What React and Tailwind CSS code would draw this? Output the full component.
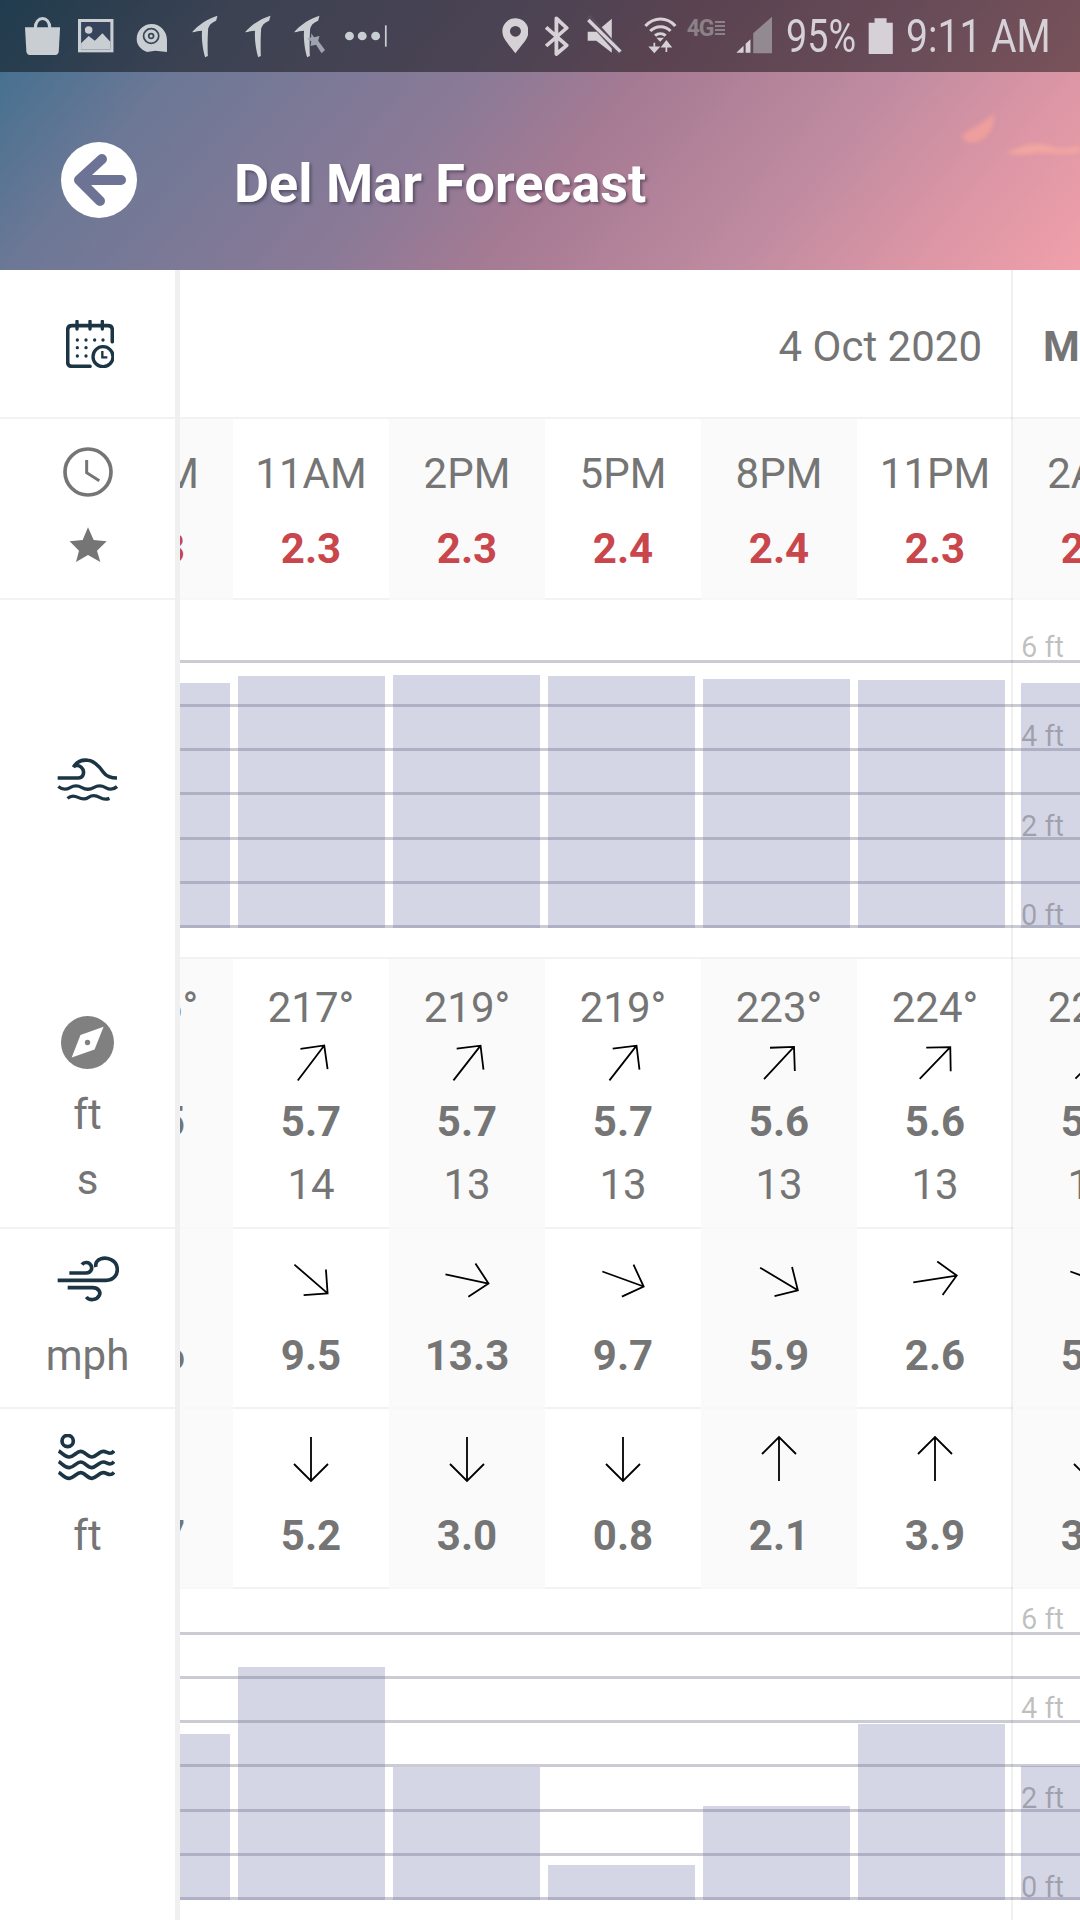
import React from "react";

const S = ({ x, w, className = "", children }) => (
  <svg width={w / 2.904} height={72} viewBox={`${x} 0 ${w} 216`} preserveAspectRatio="none" className={`shrink-0 ${className}`}>
    {children}
  </svg>
);

const L = "#c9ced3";
const R = "#d6d1d6";
const PICK = "M558 97C575 75 605 55 632 47L628 62C615 68 610 72 605 85C603 110 603 145 604 168L596 172C590 150 585 120 587 92C578 92 568 95 558 97Z";

const StatusBar = () => (
  <div className="flex h-[72px] items-center bg-black/45">
    <S x={72} w={102} className="ml-[25px]">
      <path d="M72 82H174L170 155Q168 165 158 165H88Q78 165 76 155Z" fill={L} />
      <path d="M102 84C102 46 144 46 144 84" fill="none" stroke={L} strokeWidth="9" />
    </S>
    <S x={227} w={103} className="ml-[18px]">
      <rect x="227" y="57" width="103" height="100" fill={L} />
      <rect x="236" y="66" width="85" height="82" fill="#35445a" />
      <circle cx="258" cy="90" r="11" fill={L} />
      <path d="M236 130L258 108L276 122L298 100L321 125V148H236Z" fill={L} />
    </S>
    <S x={390} w={93} className="ml-[22px]">
      <path d="M392 118C392 90 412 72 436 72C460 72 480 94 480 120V156L446 152L422 156C405 150 392 136 392 118Z" fill={L} />
      <circle cx="434" cy="108" r="22" fill="none" stroke="#3b465a" strokeWidth="5" />
      <circle cx="434" cy="108" r="7" fill="none" stroke="#3b465a" strokeWidth="5" />
    </S>
    <S x={555} w={80} className="ml-[23px]">
      <path d={PICK} fill={L} />
    </S>
    <S x={555} w={80} className="ml-[26px]">
      <path d={PICK} fill={L} />
    </S>
    <S x={555} w={108} className="ml-[21px]">
      <path d={PICK} fill={L} />
      <path d="M608 100L616 112L632 108L628 122L648 150L638 160L622 134L606 138L608 124L596 116L608 112Z" fill="#9ea4ad" />
    </S>
    <S x={1003} w={124} className="ml-[15px]">
      <circle cx="1016" cy="108" r="13" fill={L} />
      <circle cx="1053" cy="108" r="13" fill={L} />
      <circle cx="1092" cy="108" r="13" fill={L} />
      <rect x="1119" y="76" width="5" height="64" fill={L} />
    </S>

    <S x={1458} w={78} className="ml-[114px]">
      <path fillRule="evenodd" d="M1497 160C1480 135 1459 118 1459 94C1459 72 1476 55 1497 55C1518 55 1535 72 1535 94C1535 118 1514 135 1497 160ZM1497 78A16 16 0 1 0 1497 110A16 16 0 1 0 1497 78Z" fill={R} />
    </S>
    <S x={14} w={72} className="ml-[16px]">
      <path d="M20 82L80 136L50 162V55L80 84L20 138" fill="none" stroke={R} strokeWidth="11" strokeLinejoin="round" />
    </S>
    <S x={138} w={100} className="ml-[18px]">
      <path d="M140 95H165L210 56V158L165 122H140Z" fill={R} />
      <path d="M140 50L236 160" stroke="#5a4a5c" strokeWidth="20" />
      <path d="M142 60L235 155" stroke={R} strokeWidth="10" />
    </S>
    <S x={303} w={96} className="ml-[22px]">
      <path d="M307 78C332 50 370 50 394 78M321 93C338 76 364 76 380 93M335 107C344 99 357 99 366 107" fill="none" stroke={R} strokeWidth="9" />
      <path d="M350 125L339 113H361Z" fill={R} />
      <path d="M333 128V148M321 142H345L333 156ZM368 156V132M356 140L368 124L380 140Z" fill={R} stroke={R} strokeWidth="5" />
    </S>
    <div className="ml-[10px] flex h-[72px] w-[41px] shrink-0 items-start">
      <span className="mt-[14px] text-[23px] leading-[30px] font-bold tracking-[-1px] text-[#8b8189]">4G</span>
      <svg width="10" height="16" viewBox="0 0 10 16" className="mt-[21px] ml-[1px]">
        <path d="M0 1H10M0 5H10M0 9H10M0 13H10" stroke="#8b8189" strokeWidth="2" />
      </svg>
    </div>
    <S x={570} w={106} className="ml-[8px]">
      <path d="M620 160V100L675 50V160Z" fill="#938a91" />
      <path d="M571 158L592 137V158ZM598 131L612 118V158H598Z" fill={R} />
    </S>
    <div className="ml-[14px] w-[70px] shrink-0 text-[46px] leading-[72px] text-[#d6d1d6]">
      <span className="block origin-left scale-x-[0.82] whitespace-nowrap">95%</span>
    </div>
    <S x={956} w={74} className="ml-[12px]">
      <path d="M958 68H975V55H1010V68H1028V162H958Z" fill={R} />
    </S>
    <div className="ml-[12px] w-[144px] shrink-0 text-[46px] leading-[72px] text-[#d6d1d6]">
      <span className="block origin-left scale-x-[0.85] whitespace-nowrap">9:11 AM</span>
    </div>
  </div>
);

const Header = () => (
  <div className="relative bg-[linear-gradient(130deg,#3a6e8e_0%,#6c7896_18%,#8b7a97_42%,#a57a93_54%,#bf8ba0_73%,#dc96a5_87%,#f0a0aa_100%)]">
    <StatusBar />
    <div className="flex h-[198px] items-center pt-[18px]">
      <div className="ml-[61px] flex h-[76px] w-[76px] shrink-0 items-center justify-center rounded-full bg-white">
        <svg width="76" height="76" viewBox="61 142 76 76">
          <path d="M121 180H79M102 159L79 180L100 201" fill="none" stroke="#6d7394" strokeWidth="10" strokeLinecap="round" strokeLinejoin="round" />
        </svg>
      </div>
      <div className="mt-[8px] ml-[97px] text-[54px] leading-[60px] font-bold whitespace-nowrap text-white [text-shadow:2px_2px_3px_rgba(60,50,70,0.6)]">
        Del Mar Forecast
      </div>
    </div>
    <svg width="120" height="60" viewBox="960 105 120 60" className="absolute top-[105px] right-0 blur-[2px]">
      <path d="M962 135C972 128 986 122 994 113C996 125 989 140 974 143C966 143 962 140 962 135Z" fill="#ee9e9c" />
      <path d="M1007 153C1020 146 1035 141 1050 146C1060 150 1070 148 1080 146V152C1065 156 1050 152 1035 153C1025 155 1015 155 1007 153Z" fill="#f2a6a0" />
    </svg>
  </div>
);

const Arrow = ({ a }) => (
  <svg width="60" height="60" viewBox="-30 -30 60 60" className="shrink-0">
    <g transform={`rotate(${a})`}>
      <path d="M0 22V-22M-17 -5L0 -22L17 -5" fill="none" stroke="#000" strokeWidth="1.8" />
    </g>
  </svg>
);

const Navy = "#1c3544";

const IconCalendar = () => (
  <svg width="48" height="48" viewBox="198 150 144 144">
    <path d="M270 289H216Q203 289 203 276V180Q203 167 216 167H324Q337 167 337 180V215" fill="none" stroke={Navy} strokeWidth="11" strokeLinecap="round" />
    <path d="M231 154V177M270 154V177M307 154V177" stroke={Navy} strokeWidth="10" strokeLinecap="round" />
    {[[232, 210], [258, 210], [284, 210], [309, 210], [232, 233], [258, 233], [232, 258], [258, 258]].map(([x, y]) => (
      <circle key={`${x}-${y}`} cx={x} cy={y} r="5" fill={Navy} />
    ))}
    <circle cx="309" cy="260" r="30" fill="#fff" stroke={Navy} strokeWidth="10" />
    <path d="M307 243V262H322" fill="none" stroke={Navy} strokeWidth="7" />
  </svg>
);

const IconClock = () => (
  <svg width="50" height="50" viewBox="187 529 150 150">
    <circle cx="262" cy="604" r="69" fill="none" stroke="#757575" strokeWidth="11" />
    <path d="M258 568V606L296 630" fill="none" stroke="#757575" strokeWidth="9" />
  </svg>
);

const IconStar = () => (
  <svg width="38" height="36" viewBox="203 768 114 108">
    <path d="M260 769L277 807L316 811L287 839L297 873L260 852L224 873L233 839L205 811L244 807Z" fill="#757575" />
  </svg>
);

const IconWave = () => (
  <svg width="61" height="44" viewBox="168 292 186 132">
    <path d="M170 352H232C250 352 254 330 242 319C233 311 222 313 218 319C228 302 246 296 262 298C284 300 298 318 310 335C318 346 330 352 351 352" fill="none" stroke={Navy} strokeWidth="11" />
    <path d="M172 378C184 388 196 388 208 381S232 374 244 381S268 388 280 381S304 374 316 381S340 388 351 378" fill="none" stroke={Navy} strokeWidth="10" />
    <path d="M200 414C210 405 220 405 232 411S254 418 264 411S286 404 298 411S318 418 328 414" fill="none" stroke={Navy} strokeWidth="10" />
  </svg>
);

const IconCompass = () => (
  <svg width="53" height="53" viewBox="183 48 158 158">
    <circle cx="262" cy="127" r="79" fill="#808080" />
    <path d="M310 80L283 148L215 172L241 105Z" fill="#fff" />
    <circle cx="262" cy="127" r="8" fill="#808080" />
  </svg>
);

const IconWind = () => (
  <svg width="62" height="46" viewBox="168 762 186 138">
    <g fill="none" stroke={Navy} strokeWidth="11">
      <path d="M170 835H315C340 835 352 815 348 795C344 775 320 765 300 770C288 773 282 785 285 795" />
      <path d="M205 813H255C270 813 275 800 270 790C264 780 250 778 243 788" />
      <path d="M200 857H275C292 857 300 870 295 880C288 895 265 897 256 885" />
    </g>
  </svg>
);

const IconTide = () => (
  <svg width="58" height="48" viewBox="53 46 174 144">
    <circle cx="85" cy="67" r="17" fill="none" stroke={Navy} strokeWidth="11" />
    <g fill="none" stroke={Navy} strokeWidth="11">
      <path d="M58 97C68 102 76 116 90 115S112 98 124 98S146 116 158 115S180 98 192 98S212 112 224 97" />
      <path d="M58 129C68 134 76 148 90 147S112 130 124 130S146 148 158 147S180 130 192 130S212 144 224 129" />
      <path d="M58 161C68 166 76 180 90 179S112 162 124 162S146 180 158 179S180 162 192 162S212 176 224 161" />
    </g>
  </svg>
);

const Left = () => (
  <div className="w-[175px] shrink-0 text-[42px] text-[#757575]">
    <div className="flex h-[149px] items-center justify-center border-b-2 border-[#f2f2f2] pl-[4px]">
      <IconCalendar />
    </div>
    <div className="flex h-[181px] flex-col items-center border-b-2 border-[#f2f2f2] pt-[28px]">
      <IconClock />
      <div className="mt-[30px]">
        <IconStar />
      </div>
    </div>
    <div className="flex h-[359px] items-center justify-center">
      <IconWave />
    </div>
    <div className="flex h-[270px] flex-col items-center border-b-2 border-[#f2f2f2] pt-[57px]">
      <IconCompass />
      <div className="mt-[13px] h-[66px] leading-[66px]">ft</div>
      <div className="h-[64px] leading-[64px]">s</div>
    </div>
    <div className="flex h-[180px] flex-col items-center border-b-2 border-[#f2f2f2]">
      <div className="flex h-[99px] items-center">
        <IconWind />
      </div>
      <div className="h-[56px] leading-[56px]">mph</div>
    </div>
    <div className="flex h-[180px] flex-col items-center">
      <div className="flex h-[97px] items-center pr-[4px]">
        <IconTide />
      </div>
      <div className="mt-[2px] h-[56px] leading-[56px]">ft</div>
    </div>
  </div>
);

const Cell = ({ i, h, children }) => (
  <div
    className={`flex w-[156px] shrink-0 flex-col items-center border-b-2 ${
      i % 2 === 0 ? "border-[#f8f8f8] bg-[#fafafa]" : "border-[#f2f2f2] bg-white"
    }`}
    style={{ height: h }}
  >
    {children}
  </div>
);

const times = ["8AM", "11AM", "2PM", "5PM", "8PM", "11PM", "2AM"];
const score = ["2.3", "2.3", "2.3", "2.4", "2.4", "2.3", "2.3"];
const swell = [
  ["216°", 36, "5.5", "14"],
  ["217°", 37, "5.7", "14"],
  ["219°", 38, "5.7", "13"],
  ["219°", 38, "5.7", "13"],
  ["223°", 43, "5.6", "13"],
  ["224°", 44, "5.6", "13"],
  ["225°", 45, "5.5", "13"],
];
const wind = [
  [128, "7.6"],
  [131, "9.5"],
  [102, "13.3"],
  [110, "9.7"],
  [121, "5.9"],
  [81, "2.6"],
  [110, "5.2"],
];
const tide = [
  [180, "6.7"],
  [180, "5.2"],
  [180, "3.0"],
  [180, "0.8"],
  [0, "2.1"],
  [0, "3.9"],
  [180, "3.3"],
];

const Chart = ({ heights, mt, rowH }) => (
  <div className="relative" style={{ height: rowH, paddingTop: mt }}>
    <div className="relative h-[268px]">
      <div className="flex h-full items-end gap-2">
        {heights.map((b, i) => (
          <div
            key={i}
            className={`shrink-0 bg-[#d4d6e6] ${i === 0 ? "w-[50px]" : "w-[147px]"} ${i === 6 ? "ml-2" : ""}`}
            style={{ height: b }}
          />
        ))}
      </div>
      <div className="absolute inset-0 flex flex-col justify-between">
        {[0, 1, 2, 3, 4, 5, 6].map((n) => (
          <div key={n} className="h-[3px] bg-[#6a6a80]/35" />
        ))}
      </div>
      <div className="absolute -top-[27px] -bottom-[1px] left-[841px] flex flex-col justify-between text-[29px] leading-[28px] text-black/25">
        <div>6 ft</div>
        <div>4 ft</div>
        <div>2 ft</div>
        <div>0 ft</div>
      </div>
    </div>
  </div>
);

const Grid = () => (
  <div className="relative min-w-0 flex-1 overflow-hidden text-[42px] text-[#757575]">
    <div className="flex h-[149px] items-center border-b-2 border-[#f2f2f2] pt-[6px] whitespace-nowrap">
      <div className="w-[802px] shrink-0 text-right">4 Oct 2020</div>
      <div className="ml-[61px] shrink-0 font-bold">Mon</div>
    </div>
    <div className="-ml-[103px] flex">
      {times.map((t, i) => (
        <Cell key={t} i={i} h={181}>
          <div className="mt-[17px] h-[75px] leading-[75px]">{t}</div>
          <div className="h-[76px] leading-[76px] font-bold text-[#c9474c]">{score[i]}</div>
        </Cell>
      ))}
    </div>
    <Chart heights={[245, 252, 253, 252, 249, 248, 245]} mt={60} rowH={357} />
    <div className="h-[2px] bg-[#f2f2f2]" />
    <div className="-ml-[103px] flex">
      {swell.map(([d, a, v, p], i) => (
        <Cell key={i} i={i} h={270}>
          <div className="mt-[21px] h-[56px] leading-[56px]">{d}</div>
          <div className="flex h-[53px] items-center">
            <Arrow a={a} />
          </div>
          <div className="h-[66px] leading-[66px] font-bold">{v}</div>
          <div className="h-[59px] leading-[59px]">{p}</div>
        </Cell>
      ))}
    </div>
    <div className="-ml-[103px] flex">
      {wind.map(([a, v], i) => (
        <Cell key={i} i={i} h={180}>
          <div className="flex h-[99px] items-center">
            <Arrow a={a} />
          </div>
          <div className="h-[56px] leading-[56px] font-bold">{v}</div>
        </Cell>
      ))}
    </div>
    <div className="-ml-[103px] flex">
      {tide.map(([a, v], i) => (
        <Cell key={i} i={i} h={180}>
          <div className="flex h-[99px] items-center">
            <Arrow a={a} />
          </div>
          <div className="h-[56px] leading-[56px] font-bold">{v}</div>
        </Cell>
      ))}
    </div>
    <Chart heights={[166, 233, 133, 35, 94, 176, 134]} mt={43} rowH={331} />
    <div className="absolute inset-y-0 left-[831px] w-[2px] bg-black/[0.06]" />
  </div>
);

export default function App() {
  return (
    <div className="h-[1920px] w-[1080px] overflow-hidden bg-white font-[Roboto,sans-serif]">
      <Header />
      <div className="flex h-[1650px]">
        <Left />
        <div className="w-[5px] shrink-0 bg-[#f0f0f0]" />
        <Grid />
      </div>
    </div>
  );
}
